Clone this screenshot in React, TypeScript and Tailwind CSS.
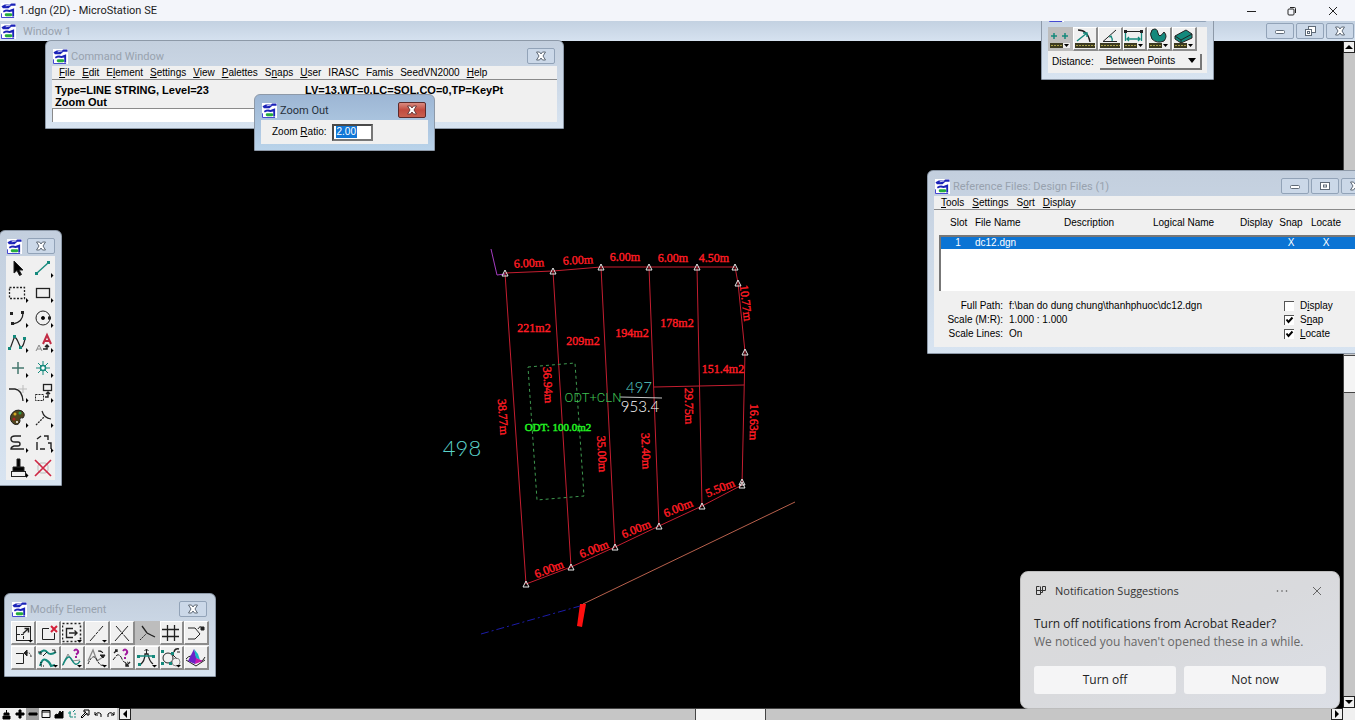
import type { ReactNode } from 'react';

const ui = 'font-["Liberation_Sans",Arial,sans-serif] text-[10px] leading-[12px] text-black';
const segoe = 'font-["Open_Sans","Noto_Sans",sans-serif]';
const caption = 'font-["Roboto","Open_Sans",sans-serif] text-[11px] leading-[15px] whitespace-nowrap';

function AppIcon({ className = '' }: { className?: string }) {
  return (
    <svg viewBox="0 0 16 16" className={`h-[15px] w-[15px] shrink-0 ${className}`}>
      <rect width="16" height="16" fill="#fff" />
      <path d="M0.500 3.500L4 1.500H9L11 0.500H15.500V3H11L8 5.500H2Z" fill="#1a22b8" />
      <path d="M5 3L10 2" stroke="#fff" strokeWidth="0.800" />
      <path d="M2 8.500Q6 6 9 7.500L14 5.500V14.500H12V9L9 9.500Q5 8.500 3 10Z" fill="#1a22b8" />
      <path d="M0.500 11V15.500H14" fill="none" stroke="#3238cc" />
      <rect x="4" y="11" width="8" height="3" rx="1.500" fill="#25ad3e" />
    </svg>
  );
}

type Glyph = 'close' | 'min' | 'max' | 'restore';

function CaptionGlyph({ kind, color }: { kind: Glyph; color: string }) {
  return (
    <svg viewBox="0 0 12 12" className="h-3 w-3" fill="none" stroke={color}>
      {kind === 'close' && (
        <path d="M1.500 2H4.500L6 4 7.500 2H10.500L8 6 10.500 10H7.500L6 8 4.500 10H1.500L4 6Z" fill="#fff" />
      )}
      {kind === 'min' && <rect x="1.500" y="5.500" width="9" height="3" rx="1" fill="#fff" />}
      {kind === 'max' && (
        <>
          <rect x="1.500" y="2.500" width="9" height="7" fill="#fff" />
          <rect x="4.500" y="5" width="3" height="2" />
        </>
      )}
      {kind === 'restore' && (
        <>
          <rect x="4.500" y="1.500" width="7" height="6" fill="#fff" />
          <rect x="1.500" y="4.500" width="6" height="6" fill="#fff" />
          <rect x="3.500" y="6.500" width="2" height="2" />
        </>
      )}
    </svg>
  );
}

function CaptionButton({ kind, label, active }: { kind: Glyph; label: string; active?: boolean }) {
  return (
    <button
      aria-label={label}
      className={`flex h-[16px] w-[28px] shrink-0 items-center justify-center rounded-[2px] border ${
        active
          ? 'border-[#5c2a2a] bg-linear-to-b from-[#d98a80] via-[#c14a3e] to-[#c8604f]'
          : 'border-[#92a3b8] bg-[#cbd8e8]'
      }`}
    >
      <CaptionGlyph kind={kind} color={active ? '#6b3a3a' : '#5f6a77'} />
    </button>
  );
}

interface WindowProps {
  title?: string;
  className: string;
  active?: boolean;
  controls?: ReactNode;
  children: ReactNode;
}

function ToolWindow({ title, className, active, controls, children }: WindowProps) {
  return (
    <section
      className={`absolute rounded-t-md border border-[#8d99a8] px-[6px] ${
        active ? 'bg-linear-to-b from-[#9db6d4] to-[#b9d3ea]' : 'bg-linear-to-b from-[#c3cfde] to-[#d8e4f1]'
      } ${className}`}
    >
      <header className="flex h-[25px] items-center justify-between gap-[3px] pt-[5px] pl-px">
        <AppIcon />
        {title && (
          <h2 className={`${caption} flex-1 ${active ? 'text-[#26303c]' : 'text-[#98a2ae]'}`}>
            {title}
          </h2>
        )}
        <div className={title ? 'pr-[2px]' : ''}>
          {controls ?? <CaptionButton kind="close" label="Close" active={active} />}
        </div>
      </header>
      {children}
    </section>
  );
}

// "&" marks the access key, as in the native resource strings
function Mnemonic({ text }: { text: string }) {
  const at = text.indexOf('&');
  if (at < 0) return <>{text}</>;
  return (
    <>
      {text.slice(0, at)}
      <span className="underline">{text[at + 1]}</span>
      {text.slice(at + 2)}
    </>
  );
}

function MenuBar({ items, className }: { items: string[]; className: string }) {
  return (
    <nav className={`flex h-[14px] items-center border-b border-[#8a8a8a] bg-[#f0f0f0] whitespace-nowrap ${className}`}>
      {items.map((item) => (
        <button key={item}>
          <Mnemonic text={item} />
        </button>
      ))}
    </nav>
  );
}

const K = '#222';
const T = '#14897c';

function Ico({ children, more, corner }: { children: ReactNode; more?: boolean; corner?: boolean }) {
  return (
    <svg viewBox="0 0 24 24" className="h-[24px] w-[24px] shrink-0" fill="none" stroke={K}>
      {children}
      {more && <path d="M17 19H22L19.500 21.500Z" fill="#000" stroke="none" />}
      {corner && <path d="M20 17L22.500 19.500 20 22Z" fill="#000" stroke="none" />}
    </svg>
  );
}

const modifyTools: { name: string; pressed?: boolean; icon: ReactNode }[] = [
  { name: 'Modify element', icon: <Ico more><rect x="5.500" y="5.500" width="14" height="14" /><path d="M6 13.500H12.500V19" strokeDasharray="3 1" /><path d="M12 12.500L17 8M13.500 7.500H17.500V11.500" strokeWidth="1.500" /></Ico> },
  { name: 'Delete part', icon: <Ico><path d="M13 7.500H6.500V18.500H18.500V12" /><path d="M15 5L21 11M21 5L15 11" stroke="#d3203a" strokeWidth="2" /></Ico> },
  { name: 'Partial delete', icon: <Ico more><rect x="2.500" y="2.500" width="18" height="18" strokeDasharray="2 2" strokeWidth="1.500" /><path d="M13 7.500H6.500V16.500H13M9 12H17M14.500 9.500L17 12 14.500 14.500" strokeWidth="1.400" /></Ico> },
  { name: 'Extend line', icon: <Ico more><path d="M5 20L18 5" strokeDasharray="8 1 3 1" /></Ico> },
  { name: 'Extend to intersection', icon: <Ico><path d="M6 5L19 20" strokeDasharray="8 1 2 1" /><path d="M18 5L5 20" /></Ico> },
  { name: 'Extend to element', pressed: true, icon: <Ico><path d="M5 19L11 13" strokeDasharray="2 1" /><path d="M7 5L12 12 20 16M12 12L16 14" strokeWidth="1.300" /></Ico> },
  { name: 'Trim', icon: <Ico><path d="M3 8.500H20M3 15.500H20M8.500 4V20M15.500 4V20" strokeWidth="1.300" /></Ico> },
  { name: 'Insert vertex', icon: <Ico><path d="M4 7H11L16 13 11 18H4" /><path d="M14 8Q16 4 18 7" /><path d="M17 6H20V9H17Z" fill={K} /></Ico> },
  { name: 'Delete vertex', icon: <Ico><path d="M5 7.500H12.500V17.500H5" /><path d="M20 11Q20 6 15 7" strokeDasharray="2 1" /><path d="M16 4L13 7 16 10Z" fill={K} /></Ico> },
  { name: 'Construct fillet', icon: <Ico more><path d="M3 8Q8 2 11 6T20 6M4 20Q6 12 10 14T15 20L19 19" stroke={T} strokeWidth="2" /><path d="M7 10L11 6M2 6H5V9M16 4H19V7" /><path d="M5 16V20H8" stroke="#000" strokeDasharray="1 1" /></Ico> },
  { name: 'Drop curve', icon: <Ico more><path d="M2 20L8 8 12 15 20 14" stroke="#888" /><path d="M3 19Q8 6 12 14T20 15" stroke={T} strokeWidth="1.500" /><path d="M14 5Q16 2 18 5Q19 7 16 8.500M16 10V12" stroke="#a01a9c" strokeWidth="2" /></Ico> },
  { name: 'Reduce points', icon: <Ico more><path d="M3 15L8 4 12 15M12 15L18 11" stroke="#888" strokeWidth="1.300" /><path d="M3 18Q8 6 12 14T19 18" strokeDasharray="3 1" /><path d="M13 5Q17 4 18 7M15 9H20L18 12Z" fill={K} /></Ico> },
  { name: 'Query curve', icon: <Ico><path d="M3 14L7 9Q10 8 12 13T18 16" strokeDasharray="4 1" /><path d="M4 7L7 4M5 4H7V6M20 16L16 20M16 17V20H19" strokeWidth="1.400" /><path d="M13 5Q15 2 17 5Q18 7 15 9M15 11V13" stroke="#a01a9c" strokeWidth="2" /></Ico> },
  { name: 'Change to curve', icon: <Ico more><path d="M5 19Q10 15 10 8H13Q14 15 18 18" strokeWidth="1.300" /><path d="M3 10H20" stroke={T} strokeWidth="1.500" /><path d="M2 9H5V12H2ZM17 9H20V12H17ZM3 17H6V20H3Z" fill={T} stroke="none" /><path d="M11.500 3V8M9.500 5L11.500 3 13.500 5" /></Ico> },
  { name: 'Convert to arc', icon: <Ico more><circle cx="9" cy="12" r="5" /><path d="M13 8L18 13M18 6H21" /><circle cx="17" cy="16" r="4" stroke="#888" /><path d="M2 4H5V7H2ZM2 16H5V19H2ZM10 16H13V19H10ZM12 6H15V9H12Z" fill={T} stroke="none" /><path d="M20 3Q16 2 15 6" strokeWidth="1.500" /></Ico> },
  { name: 'Surface', icon: <Ico><path d="M2 13Q7 7 12 13T21 11M2 14L12 20 21 14" /><path d="M4 15L10 3 13 14 11 18Z" fill="#6a22c8" stroke="none" /><path d="M10 3L14 8 16 14 12 12Z" fill="#18b5c4" stroke="none" /><path d="M12 12L19 15 11 18Z" fill="#c61ab0" stroke="none" /></Ico> },
];

const mainTools: { name: string; icon: ReactNode }[] = [
  { name: 'Element selection', icon: <Ico><path d="M8 5V17L11 14.500 13.500 19.500 15.500 18.500 13 14H17Z" fill="#000" /></Ico> },
  { name: 'Place line', icon: <Ico corner><path d="M6 17L17 7" stroke={T} strokeWidth="1.300" /><path d="M4 16H7V19H4ZM16 5H19V8H16Z" fill={T} stroke="none" /></Ico> },
  { name: 'Place fence', icon: <Ico corner><rect x="3.500" y="6.500" width="15" height="11" strokeDasharray="2 1.500" strokeWidth="1.300" /></Ico> },
  { name: 'Place block', icon: <Ico corner><rect x="5.500" y="7.500" width="13" height="9" strokeWidth="1.300" /></Ico> },
  { name: 'Place arc', icon: <Ico corner><path d="M17 7Q17 16 7 18" strokeWidth="1.300" /><path d="M4 6H7V9H4ZM15 5H18V8H15ZM5 16H8V19H5Z" fill={K} stroke="none" /></Ico> },
  { name: 'Place circle', icon: <Ico corner><circle cx="12" cy="12" r="7" /><circle cx="12" cy="12" r="1.600" fill="#000" /><path d="M17 10.500H20V13.500H17Z" fill={K} stroke="none" /></Ico> },
  { name: 'Place curve', icon: <Ico corner><path d="M4 18L8 7Q10 5 13 13T19 8" strokeWidth="1.200" /><path d="M2 16H5V19H2ZM7 4H10V7H7ZM13 15H16V18H13ZM17 6H20V9H17Z" fill={T} stroke="none" /></Ico> },
  { name: 'Place text', icon: <Ico corner><path d="M12 13L16 4 20 13M13 10H19" stroke="#c22c45" strokeWidth="2" /><path d="M5 20L8 14 11 20M6 18H10" stroke="#888" /><path d="M12 18H16V14M14 16L16 14 18 16" strokeWidth="1.500" /></Ico> },
  { name: 'Place active point', icon: <Ico corner><path d="M12 6V18M6 12H18" stroke="#44776e" strokeWidth="1.500" /></Ico> },
  { name: 'Place cell', icon: <Ico corner><path d="M12 5V19M5 12H19M7 7L17 17M17 7L7 17" stroke={T} /><circle cx="12" cy="12" r="2.500" fill="#fff" stroke={T} strokeWidth="1.500" /></Ico> },
  { name: 'Trim edge', icon: <Ico corner><path d="M3 8H9Q16 9 17 20" strokeWidth="1.300" /><path d="M17 4V12M12 8H21" stroke="#bbb" /></Ico> },
  { name: 'Copy element', icon: <Ico corner><rect x="12.500" y="3.500" width="8" height="6" strokeWidth="1.300" /><rect x="4.500" y="13.500" width="8" height="6" strokeDasharray="2 1" /><path d="M14 16H17V12M15 13L17 11 19 13" strokeWidth="1.400" /></Ico> },
  { name: 'Change attributes', icon: <Ico corner><path d="M5 9Q9 2 16 5Q20 8 17 12Q13 11 14 15Q13 20 8 18Q3 15 5 9Z" fill="#51451d" /><circle cx="9" cy="8" r="1.500" fill="#d3a821" stroke="none" /><circle cx="14" cy="7" r="1.500" fill="#2c9d4e" stroke="none" /><circle cx="8" cy="13" r="1.500" fill="#a22" stroke="none" /><circle cx="11" cy="16" r="1" fill="#fff" stroke="none" /></Ico> },
  { name: 'Modify', icon: <Ico corner><path d="M11 5Q13 12 20 13" strokeWidth="1.200" /><path d="M5 19L13 11" strokeDasharray="2 1" strokeWidth="1.300" /></Ico> },
  { name: 'Create chain', icon: <Ico corner><path d="M15 5H9Q5 5 5 8T9 11H12Q14 11 14 13T12 15H8Q5 16 5 18H18" strokeWidth="1.400" /></Ico> },
  { name: 'Drop element', icon: <Ico corner><path d="M6 19V11M6 8L10 5M13 5H17V9M17 12H20V18M14 18H9" strokeWidth="1.400" /></Ico> },
  { name: 'Measure', icon: <Ico corner><path d="M11 3H14V11H11ZM7 11H18V15H7Z" fill="#000" /><rect x="5.500" y="15.500" width="14" height="5" /></Ico> },
  { name: 'Delete element', icon: <Ico><rect x="7" y="7" width="10" height="10" rx="3" stroke="#bbb" /><path d="M4 4L20 20M20 4L4 20" stroke="#cf2744" strokeWidth="1.700" /></Ico> },
];

function Ruler({ more, children }: { more?: boolean; children: ReactNode }) {
  return (
    <svg viewBox="0 0 24 24" className="h-[24px] w-[24px] shrink-0" fill="none" stroke={K}>
      {children}
      <rect x="2" y="16" width="20" height="5" fill="#3c3a20" stroke="none" />
      <path d="M3 18.500H22" stroke="#a9a04a" strokeDasharray="2 1" />
      {more && <path d="M15 16H22V21H15Z" fill="#eee" stroke="none" />}
      {more && <path d="M16 17H21L18.500 20Z" fill="#000" stroke="none" />}
    </svg>
  );
}

const measureTools: { name: string; pressed?: boolean; icon: ReactNode }[] = [
  { name: 'Measure distance', pressed: true, icon: <Ruler more><path d="M6 6V12M3 9H9M17 6V12M14 9H20" stroke={T} strokeWidth="1.500" /></Ruler> },
  { name: 'Measure radius', icon: <Ruler><path d="M5 3Q15 3 17 15" strokeWidth="1.300" /><path d="M4 14L14 6M10 6H14V10" stroke={T} strokeWidth="1.400" /></Ruler> },
  { name: 'Measure angle', icon: <Ruler><path d="M18 3L5 14.500H19" /><path d="M12 9Q15 11 14 14M11 10L14 9" stroke={T} strokeWidth="1.300" /></Ruler> },
  { name: 'Measure length', icon: <Ruler more><path d="M3 4.500H20" /><path d="M3.500 6V14M19.500 6V14M5 12H18M7 10L5 12 7 14M16 10L18 12 16 14" stroke={T} strokeWidth="1.300" /><path d="M2 3H5V6H2ZM18 3H21V6H18Z" fill={K} stroke="none" /></Ruler> },
  { name: 'Measure area', icon: <Ruler more><path d="M5 3Q10 0 11 6T17 5Q21 9 17 14Q10 17 5 12Q2 7 5 3Z" fill={T} /></Ruler> },
  { name: 'Measure volume', icon: <Ruler more><path d="M3 9L14 3 20 7V11L9 16 3 12Z" fill={T} /><path d="M3 9L9 13 20 7M9 13V16" /></Ruler> },
];

function ToolButton({ name, pressed, children }: { name: string; pressed?: boolean; children: ReactNode }) {
  return (
    <button
      aria-label={name}
      className={`flex h-[24px] items-center justify-center overflow-hidden border-t border-r-2 border-b-2 border-l ${
        pressed ? 'border-[#bdbdbd] bg-[#bdbdbd]' : 'border-t-white border-r-[#8c8c8c] border-b-[#8c8c8c] border-l-white bg-[#f0f0f0]'
      }`}
    >
      {children}
    </button>
  );
}

type Label = [text: string, x: number, y: number, angle: number];

const redLabels: Label[] = [
  ['6.00m', 529, 263, -3],
  ['6.00m', 578, 260, -3],
  ['6.00m', 625, 257, 0],
  ['6.00m', 673, 258, 0],
  ['4.50m', 714, 258, 0],
  ['10.77m', 746, 303, 83],
  ['16.63m', 754, 422, 91],
  ['29.75m', 689, 406, 89],
  ['32.40m', 646, 451, 88],
  ['35.00m', 602, 454, 87],
  ['36.94m', 548, 385, 87],
  ['38.77m', 503, 417, 86],
  ['6.00m', 549, 569, -21],
  ['6.00m', 594, 549, -21],
  ['6.00m', 636, 529, -22],
  ['6.00m', 678, 508, -22],
  ['5.50m', 720, 488, -22],
  ['221m2', 534, 328, 0],
  ['209m2', 583, 341, 0],
  ['194m2', 632, 333, 0],
  ['178m2', 677, 323, 0],
  ['151.4m2', 723, 369, 0],
];

const vertices = [
  [505, 273], [553, 271], [601, 267], [649, 267], [697, 267], [735, 267], [738, 283], [745, 352],
  [742, 485], [702, 506], [659, 526], [615, 547], [571, 567], [526, 584],
];

function ParcelDrawing() {
  return (
    <svg viewBox="440 240 370 400" className="absolute top-[219px] left-[440px] h-[400px] w-[370px]" fill="none">
      <g stroke="#c41e30">
        <polygon points={vertices.map((v) => v.join(',')).join(' ')} />
        <path d="M553 271L571 567M601 267L615 547M649 267L659 526M697 267L702 506M654 387L744 385" />
      </g>
      <path d="M491 249L497 275 505 274" stroke="#a43cc0" />
      <path d="M528 367L575 363 584 496 537 500Z" stroke="#3f9a50" strokeDasharray="3 3" />
      <path d="M583 604L795 502" stroke="#b8604c" />
      <path d="M580 604H586L582 627 577 626Z" fill="#ff1010" />
      <path d="M481 634L580 606" stroke="#1c1ca8" strokeDasharray="8 3 2 3" />
      <path d="M620 397L662 398" stroke="#c8c8c8" />
      <g stroke="#e8e8e8">
        {vertices.map(([x, y]) => (
          <path key={`${x}-${y}`} d={`M${x} ${y - 3}L${x + 3} ${y + 3}H${x - 3}Z`} />
        ))}
        <path d="M742 479L745 485H739Z" />
      </g>
      <g textAnchor="middle" dominantBaseline="central">
        <g fill="#ff1c24" stroke="#ff1c24" strokeWidth="0.4" className="font-['Liberation_Serif',serif] text-[12px]">
          {redLabels.map(([text, x, y, angle]) => (
            <text key={`${x}-${y}`} transform={`translate(${x} ${y}) rotate(${angle})`}>
              {text}
            </text>
          ))}
        </g>
        <text x="558" y="427" fill="#22f022" stroke="#22f022" strokeWidth="0.5" className="font-['Liberation_Serif',serif] text-[11px]">
          ODT: 100.0m2
        </text>
        <g className="font-['Lato',sans-serif] font-light">
          <text x="462" y="447" fill="#5ad2ca" className="text-[22px]">498</text>
          <text x="639" y="387" fill="#5ad2ca" className="text-[15px]">497</text>
          <text x="640" y="406" fill="#ffffff" className="text-[15px]">953.4</text>
        </g>
        <text x="593" y="397" fill="#3fc052" className="font-['Roboto',sans-serif] text-[13px] font-light">ODT+CLN</text>
      </g>
    </svg>
  );
}

function CommandWindow() {
  return (
    <ToolWindow title="Command Window" className="top-[19px] left-[45px] h-[89px] w-[519px]">
      <div className={`${ui} bg-[#f0f0f0]`}>
        <MenuBar
          className="gap-[7px] px-[7px]"
          items={['&File', '&Edit', 'E&lement', '&Settings', '&View', '&Palettes', 'S&naps', '&User', 'IRASC', 'Famis', 'SeedVN2000', '&Help']}
        />
        <div className="flex h-[28px] pt-[4px] pl-[3px] text-[11px] leading-[12px] font-bold">
          <p className="w-[250px]">
            Type=LINE STRING, Level=23
            <br />
            Zoom Out
          </p>
          <p>LV=13,WT=0,LC=SOL,CO=0,TP=KeyPt</p>
        </div>
        <input aria-label="Key-in" className="block h-[14px] w-[250px] border-t border-l border-[#8a8a8a] bg-white px-1" />
      </div>
    </ToolWindow>
  );
}

function ZoomDialog() {
  return (
    <ToolWindow title="Zoom Out" active className="top-[73px] left-[254px] w-[181px] pb-[6px]">
      <label className={`${ui} flex h-[24px] items-center gap-[6px] bg-[#f0f0f0] pl-[11px]`}>
        <span>
          <Mnemonic text="Zoom &Ratio:" />
        </span>
        <span className="flex h-[17px] w-[41px] items-center border-2 border-[#4a4a4a] border-r-[#777] border-b-[#777] bg-white pl-[2px]">
          <input defaultValue="2.00" className="w-[21px] bg-[#1177d7] text-white" />
        </span>
      </label>
    </ToolWindow>
  );
}

function MeasureWindow() {
  return (
    <ToolWindow className="-top-[23px] left-[1041px] w-[173px] pb-[6px]">
      <div className={`${ui} mt-[3px] bg-[#f0f0f0]`}>
        <div className="grid w-[149px] grid-cols-6">
          {measureTools.map((tool) => (
            <ToolButton key={tool.name} name={tool.name} pressed={tool.pressed}>
              {tool.icon}
            </ToolButton>
          ))}
        </div>
        <label className="flex items-center gap-[6px] py-[3px] pl-[4px]">
          Distance:
          <span className="relative flex w-[102px] border-r-2 border-b-2 border-[#777] bg-[#f0f0f0]">
            <select className="h-[14px] w-full appearance-none pl-[6px] leading-[12px]">
              <option>Between Points</option>
            </select>
            <svg viewBox="0 0 8 5" className="absolute top-[4px] right-[4px] h-[5px] w-[8px]">
              <path d="M0 0H8L4 5Z" />
            </svg>
          </span>
        </label>
      </div>
    </ToolWindow>
  );
}

function MainPalette() {
  return (
    <ToolWindow className="top-[209px] -left-px w-[63px] pb-[5px]">
      <div className="grid h-[224px] grid-cols-2 grid-rows-9 bg-[#f0f0f0]">
        {mainTools.map((tool) => (
          <button key={tool.name} aria-label={tool.name} className="flex items-center justify-center">
            {tool.icon}
          </button>
        ))}
      </div>
    </ToolWindow>
  );
}

function ModifyWindow() {
  return (
    <ToolWindow title="Modify Element" className="top-[572px] left-[4px] w-[212px] pb-[6px]">
      <div className="mt-[2px] grid grid-cols-8 gap-y-px bg-[#f0f0f0]">
        {modifyTools.map((tool) => (
          <ToolButton key={tool.name} name={tool.name} pressed={tool.pressed}>
            {tool.icon}
          </ToolButton>
        ))}
      </div>
    </ToolWindow>
  );
}

const refFlags = [
  { label: 'D&isplay', checked: false },
  { label: 'S&nap', checked: true },
  { label: '&Locate', checked: true },
];

function ReferenceWindow() {
  return (
    <ToolWindow
      title="Reference Files: Design Files (1)"
      className="top-[149px] left-[927px] w-[451px] pb-[6px]"
      controls={
        <div className="flex gap-[2px]">
          <CaptionButton kind="min" label="Minimize" />
          <CaptionButton kind="max" label="Maximize" />
          <CaptionButton kind="close" label="Close" />
        </div>
      }
    >
      <div className={`${ui} bg-[#f0f0f0] pb-[6px]`}>
        <MenuBar className="gap-[8px] px-[7px]" items={['&Tools', '&Settings', 'S&ort', '&Display']} />
        <table className="ml-[5px] w-[429px] table-fixed border-collapse text-left">
          <thead>
            <tr className="h-[26px]">
              <th className="w-[35px] pl-[10px] font-normal">Slot</th>
              <th className="w-[89px] font-normal">File Name</th>
              <th className="w-[89px] font-normal">Description</th>
              <th className="w-[87px] font-normal">Logical Name</th>
              <th className="w-[34px] font-normal">Display</th>
              <th className="w-[34px] text-center font-normal">Snap</th>
              <th className="w-[36px] text-center font-normal">Locate</th>
              <th />
            </tr>
          </thead>
          <tbody className="border-t-2 border-l-2 border-[#777] bg-white">
            <tr className="h-[13px] bg-[#0b74d4] text-white">
              <td className="text-center">1</td>
              <td>dc12.dgn</td>
              <td />
              <td />
              <td />
              <td className="text-center">X</td>
              <td className="text-center">X</td>
              <td />
            </tr>
            <tr className="h-[42px]">
              <td colSpan={8} />
            </tr>
          </tbody>
        </table>
        <div className="mt-[8px] flex leading-[14px]">
          <dl className="grid w-[350px] grid-cols-[69px_1fr] gap-x-[6px]">
            <dt className="text-right">Full Path:</dt>
            <dd>f:\ban do dung chung\thanhphuoc\dc12.dgn</dd>
            <dt className="text-right">Scale (M:R):</dt>
            <dd>1.000 : 1.000</dd>
            <dt className="text-right">Scale Lines:</dt>
            <dd>On</dd>
          </dl>
          <div>
            {refFlags.map((flag) => (
              <label key={flag.label} className="flex h-[14px] items-center gap-[6px]">
                <span className="relative flex">
                  <input
                    type="checkbox"
                    defaultChecked={flag.checked}
                    className="peer h-[10px] w-[10px] appearance-none border-t border-l border-[#555] bg-white"
                  />
                  <svg viewBox="0 0 10 10" className="absolute inset-0 hidden h-[10px] w-[10px] peer-checked:block">
                    <path d="M2.500 4.500L4.500 7 8.500 2.500" fill="none" stroke="#000" strokeWidth="2" />
                  </svg>
                </span>
                <span>
                  <Mnemonic text={flag.label} />
                </span>
              </label>
            ))}
          </div>
        </div>
      </div>
    </ToolWindow>
  );
}

function Arrow({ d, label, className }: { d: string; label: string; className: string }) {
  return (
    <button aria-label={label} className={`flex shrink-0 items-center justify-center border border-[#222] bg-[#f0f0f0] ${className}`}>
      <svg viewBox="0 0 8 8" className="h-2 w-2">
        <path d={d} />
      </svg>
    </button>
  );
}

const viewControls: { name: string; d: string; fill?: boolean; color?: string }[] = [
  { name: 'Update view', d: 'M5.500 2V5M3 5H8V7H3ZM2 8H9V11H2Z', fill: true },
  { name: 'Zoom in', d: 'M5 2H7V5H10V7H7V10H5V7H2V5H5Z', fill: true },
  { name: 'Zoom out', d: 'M2 5H10V7H2Z', fill: true },
  { name: 'Window area', d: 'M2 2.500H10V9.500H2ZM2 4H10' },
  { name: 'Fit view', d: 'M2 10V7L4 6 5 7 7 3 8 5 10 3V10Z', fill: true },
  { name: 'Rotate view', d: 'M2 5H5M4 3V9H7M7 4L9 2M8 6H10M9 8V10', color: T },
  { name: 'Pan view', d: 'M2 9L7 4H5V2H10V7H8V5L3 10Z' },
  { name: 'View previous', d: 'M3 4V7H6M3 7Q6 3 9 6V9' },
  { name: 'View next', d: 'M9 4V7H6M9 7Q6 3 3 6V9' },
];

function StatusRow() {
  return (
    <div className="flex h-3 bg-[#c6c6c6]">
      <div className="flex bg-[#f0f0f0]">
        {viewControls.map((v) => (
          <button
            key={v.name}
            aria-label={v.name}
            className={`flex w-[13px] items-center justify-center ${v.name === 'Zoom out' ? 'bg-[#a0a0a0]' : ''}`}
          >
            <svg viewBox="0 0 12 12" className="h-3 w-3" fill={v.fill ? '#000' : 'none'} stroke={v.color ?? '#000'}>
              <path d={v.d} />
            </svg>
          </button>
        ))}
      </div>
      <Arrow label="Scroll left" className="ml-[2px] w-3" d="M6 0V8L2 4Z" />
      <div className="flex flex-1 border-t border-[#444]">
        <div className="w-[47%]" />
        <div className="w-[71px] border-x border-[#444] bg-[#f4f4f4]" />
      </div>
      <Arrow label="Scroll right" className="w-3" d="M2 0V8L6 4Z" />
      <div className="w-3 bg-[#f0f0f0]" />
    </div>
  );
}

function Notification() {
  return (
    <aside
      className={`${segoe} absolute right-[15px] bottom-[11px] w-[320px] rounded-lg border border-[#bdbdbd] bg-linear-to-br from-[#dadada] via-[#d9dadd] to-[#dcdfe6] px-[13px] pt-[12px] pb-[14px] text-[12px] text-[#222]`}
    >
      <div className="flex h-[14px] items-center text-[11px] text-[#333]">
        <svg viewBox="0 0 12 12" className="mr-[8px] ml-[1px] h-3 w-3" fill="none" stroke="#333">
          <path d="M4.500 1.500H1.500V9.500H5.500V1.500M1.500 5.500H10.500V1.500H7.500V7.500H5.500" />
        </svg>
        <span className="flex-1">Notification Suggestions</span>
        <button aria-label="More options" className="mr-[24px]">
          <svg viewBox="0 0 12 4" className="h-1 w-3" fill="#555">
            <circle cx="1.500" cy="2" r="0.800" />
            <circle cx="6" cy="2" r="0.800" />
            <circle cx="10.500" cy="2" r="0.800" />
          </svg>
        </button>
        <button aria-label="Dismiss" className="mr-[4px]">
          <svg viewBox="0 0 10 10" className="h-[10px] w-[10px]" stroke="#666">
            <path d="M1 1L9 9M9 1L1 9" />
          </svg>
        </button>
      </div>
      <p className="mt-[17px] leading-[18px]">Turn off notifications from Acrobat Reader?</p>
      <p className="leading-[17px] text-[#676767]">We noticed you haven't opened these in a while.</p>
      <div className="mt-[16px] grid grid-cols-2 gap-2">
        <button className="h-[28px] rounded-[3px] bg-[#f5f5f6]">Turn off</button>
        <button className="h-[28px] rounded-[3px] bg-[#f5f5f6]">Not now</button>
      </div>
    </aside>
  );
}

export default function App() {
  return (
    <div className="relative flex h-screen flex-col overflow-hidden bg-black">
      <header className="flex h-[21px] shrink-0 items-center bg-[#f3f5fa] pl-[1px]">
        <AppIcon />
        <h1 className={`${caption} ml-[3px] flex-1 text-[#1c1c1c]`}>1.dgn (2D) - MicroStation SE</h1>
        <div className="flex items-center gap-[31px] pr-[17px]">
          <button aria-label="Minimize">
            <svg viewBox="0 0 10 10" className="h-[10px] w-[10px]" stroke="#222"><path d="M1 5.500H10" /></svg>
          </button>
          <button aria-label="Restore">
            <svg viewBox="0 0 10 10" className="h-[10px] w-[10px]" fill="none" stroke="#222">
              <rect x="1" y="3" width="6" height="6" rx="1" />
              <path d="M3 1.500H7.500Q8.500 1.500 8.500 2.500V7" />
            </svg>
          </button>
          <button aria-label="Close">
            <svg viewBox="0 0 10 10" className="h-[10px] w-[10px]" stroke="#222"><path d="M1 1L9 9M9 1L1 9" /></svg>
          </button>
        </div>
      </header>

      <main className="relative flex min-h-0 flex-1 flex-col overflow-hidden">
        <div className="flex h-[20px] shrink-0 items-center bg-linear-to-b from-[#c3d1e1] to-[#d6e2f0] pr-px pl-[1px]">
          <AppIcon />
          <h2 className={`${caption} ml-[7px] flex-1 text-[#98a2ae]`}>Window 1</h2>
          <div className="flex gap-[2px]">
            <CaptionButton kind="min" label="Minimize view" />
            <CaptionButton kind="restore" label="Restore view" />
            <CaptionButton kind="close" label="Close view" />
          </div>
        </div>
        <div className="flex min-h-0 flex-1">
          <div className="flex-1">
            <ParcelDrawing />
          </div>
          <div className="flex w-3 flex-col bg-[#c6c6c6]">
            <Arrow label="Scroll up" className="h-3" d="M0 6H8L4 2Z" />
            <div className="flex flex-1 flex-col border-l border-[#444]">
              <div className="h-[47%]" />
              <div className="h-[38px] border-y border-[#444] bg-[#f4f4f4]" />
            </div>
            <Arrow label="Scroll down" className="h-3" d="M0 2H8L4 6Z" />
          </div>
        </div>
        <StatusRow />
        <CommandWindow />
        <ZoomDialog />
        <MeasureWindow />
        <ReferenceWindow />
        <MainPalette />
        <ModifyWindow />
      </main>
      <Notification />
    </div>
  );
}
